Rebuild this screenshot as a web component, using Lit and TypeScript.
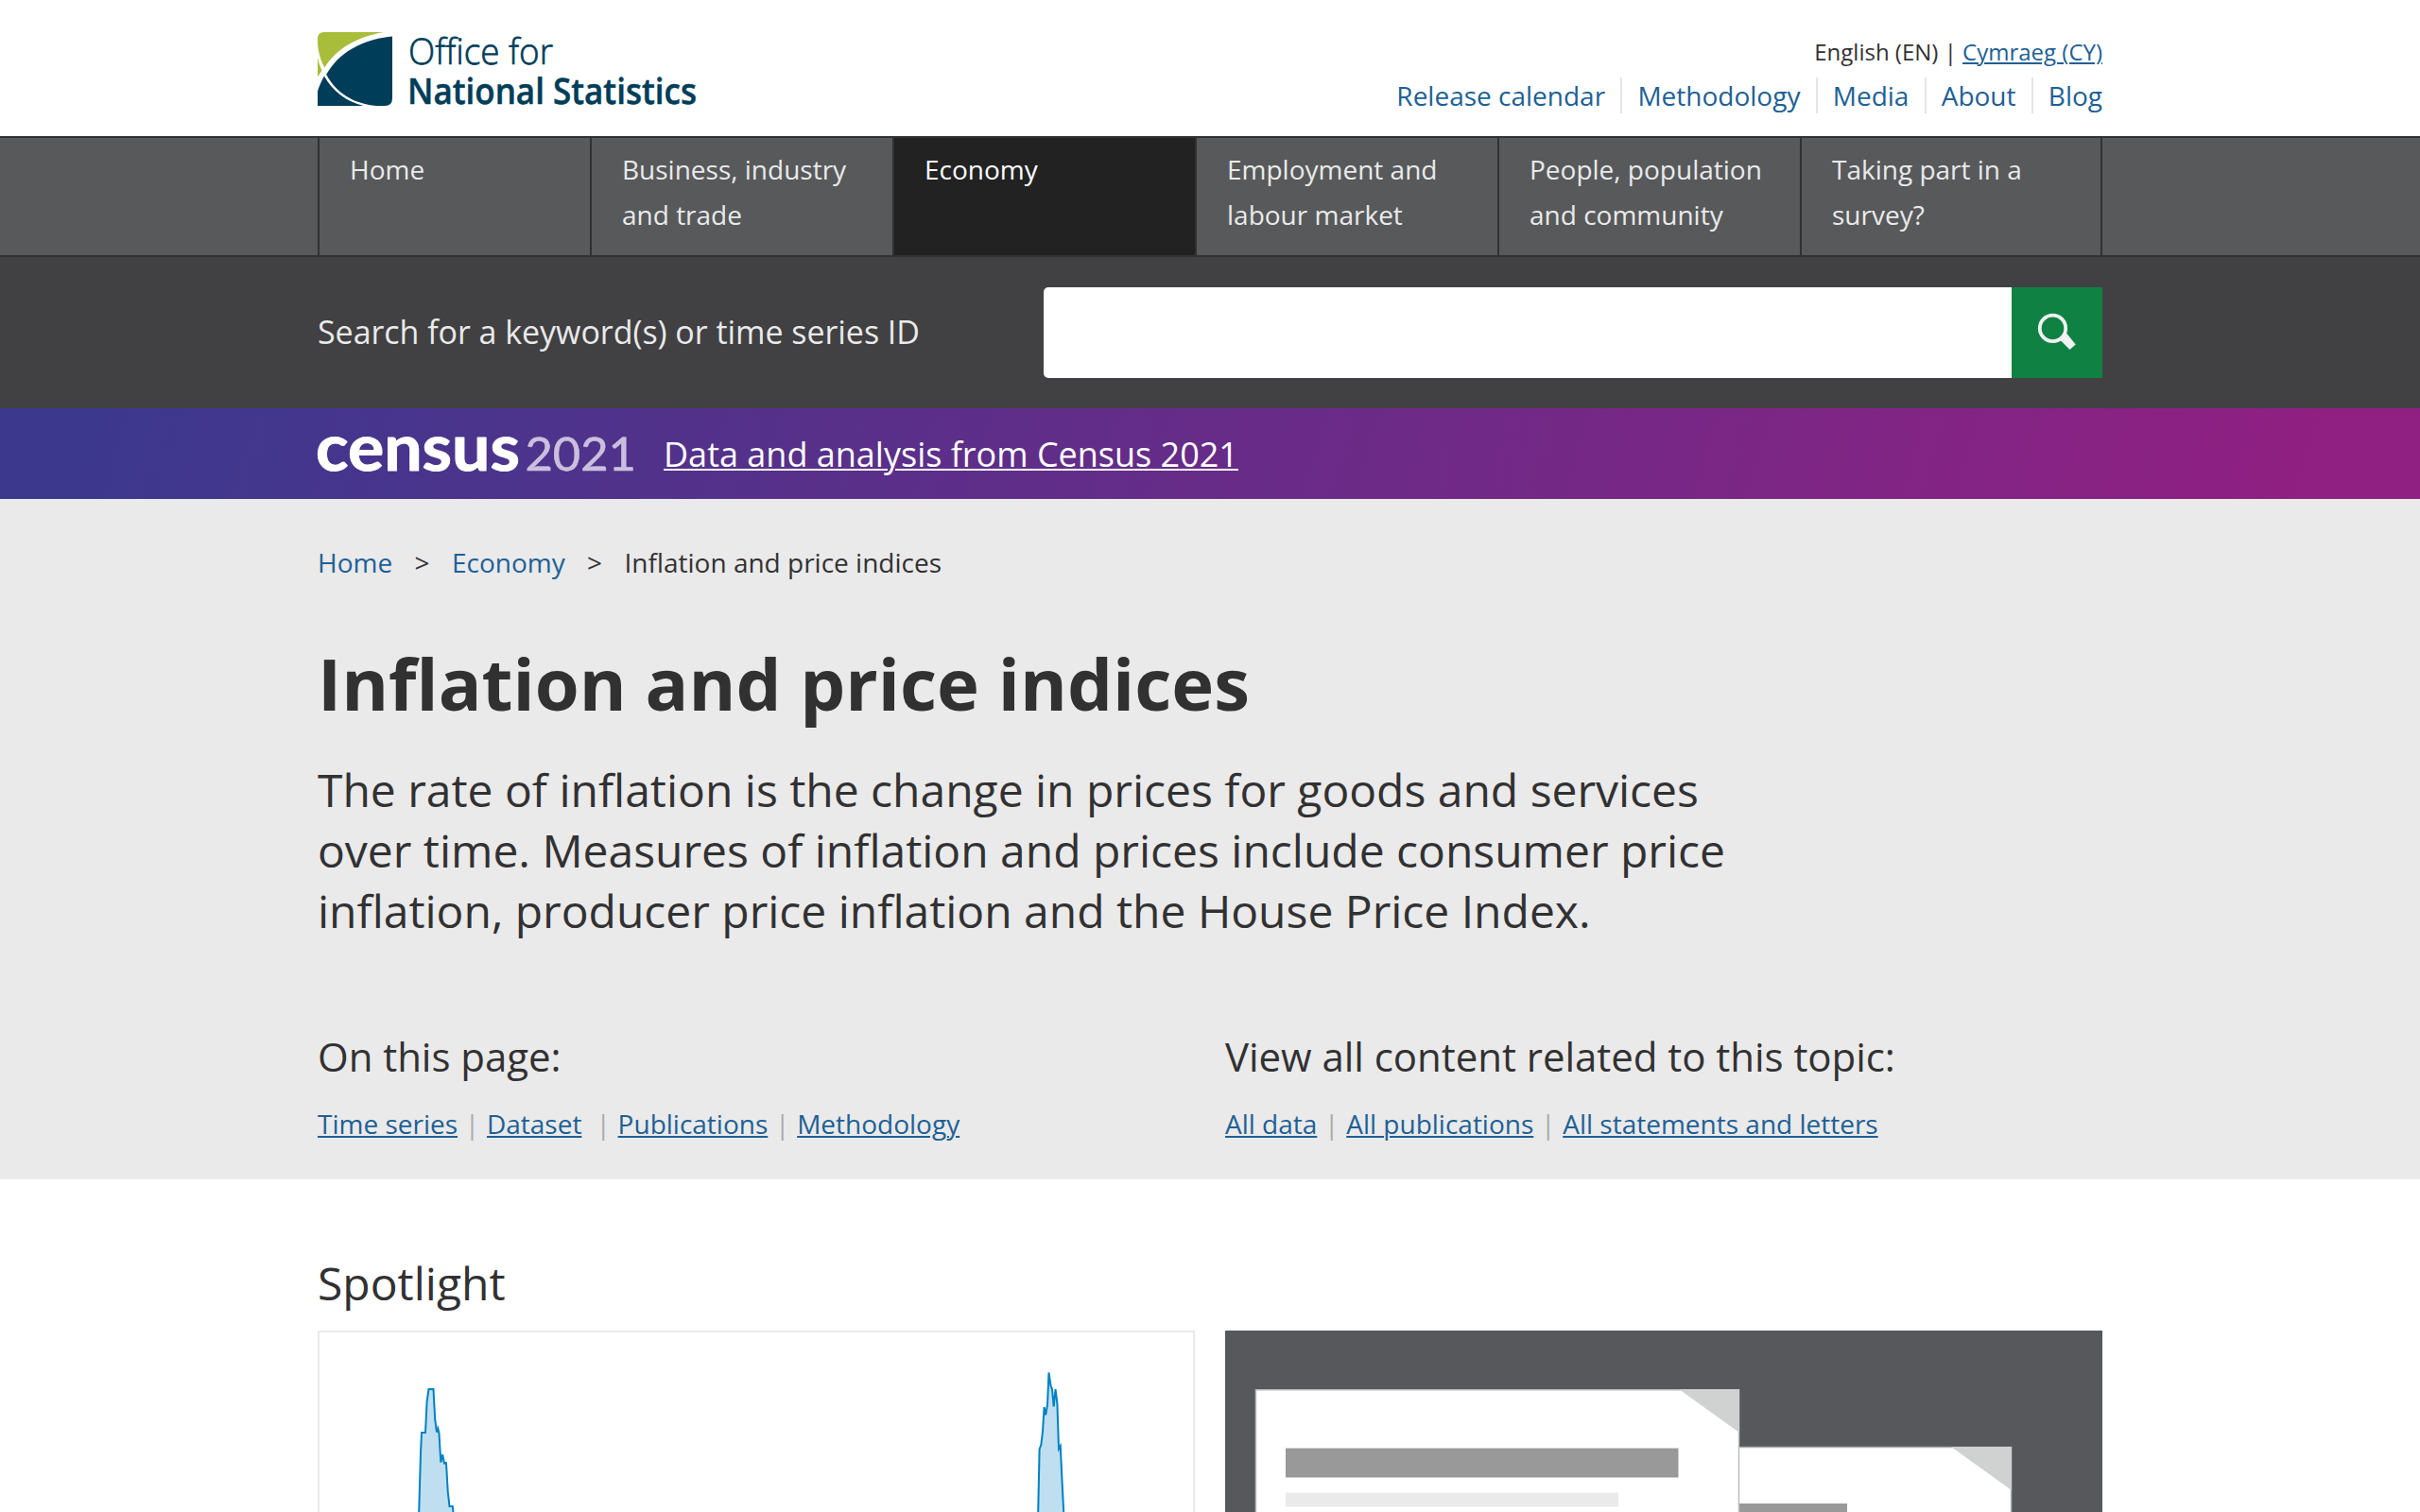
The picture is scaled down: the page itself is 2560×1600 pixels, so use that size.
import { LitElement, html, css, svg } from "lit";
import { customElement } from "lit/decorators.js";
import { classMap } from "lit/directives/class-map.js";

interface NavItem {
  label: string;
  active?: boolean;
}

interface PageLink {
  label: string;
  spaced?: boolean;
}

const SITE_LINKS = ["Release calendar", "Methodology", "Media", "About", "Blog"];

const NAV: NavItem[] = [
  { label: "Home" },
  { label: "Business, industry and trade" },
  { label: "Economy", active: true },
  { label: "Employment and labour market" },
  { label: "People, population and community" },
  { label: "Taking part in a survey?" },
];

const ON_PAGE: PageLink[] = [
  { label: "Time series" },
  { label: "Dataset", spaced: true },
  { label: "Publications" },
  { label: "Methodology" },
];

const RELATED: PageLink[] = [
  { label: "All data" },
  { label: "All publications" },
  { label: "All statements and letters" },
];

const PEAKS = [
  "104.6,200 105.2,190 107,128 108,106 112,106 113.6,73 115.5,60 120.5,60 122.2,92 124,105.5 125.3,101.7 126.5,107 128.3,137.5 130.2,129.3 132,138.5 134,138 135.7,168 137.5,184 140.8,184 142.5,200",
  "759.6,200 760.2,190 761.6,123.5 763.3,119 765,105 766.6,79 768.2,87.3 770,76.7 771.5,42.5 773.6,56.7 775,60 776.7,78.3 778.5,60 780.4,75 782,123.3 783.8,120 785.3,153 787.2,190 788,200",
];

@customElement("ons-logo")
class OnsLogo extends LitElement {
  static styles = css`
    :host {
      display: block;
    }
    .logo {
      display: block;
      overflow: visible;
      text-rendering: geometricPrecision;
    }
    .navy {
      fill: #003d59;
    }
    .lime {
      fill: #a8bd3a;
    }
    .line {
      font: 400 38px "Open Sans", "Noto Sans", sans-serif;
    }
    .light {
      font-weight: 300;
      stroke: #003d59;
      stroke-width: 0.7;
    }
    .strong {
      font-weight: 600;
      stroke: #003d59;
      stroke-width: 0.5;
    }
  `;

  render() {
    return html`
      <svg class="logo" width="402" height="78" viewBox="0 0 402 78" role="img">
        <path class="lime" d="M0 7Q0 0 7 0H70C42 5 20 17 7.4 37.6C3.6 31 .8 22 0 12Z" />
        <path class="lime" d="M0 26C.8 31 2.2 36 4.6 40.4L0 47.5Z" />
        <path
          class="navy"
          d="M79 4.5V70Q79 78 71 78H62C38 76 19 64 9.2 44.8C22 22 46 8 79 4.5Z"
        />
        <path class="navy" d="M0 62.5C1.8 57 4.2 51.500 7 46.6C16 63 31 74 48.500 78H0Z" />
        <text class="navy line light" x="96" y="34" textLength="153" lengthAdjust="spacingAndGlyphs">
          Office for
        </text>
        <text class="navy line strong" x="95" y="76" textLength="306" lengthAdjust="spacingAndGlyphs">
          National Statistics
        </text>
      </svg>
    `;
  }
}

@customElement("census-banner")
class CensusBanner extends LitElement {
  static styles = css`
    :host {
      display: block;
      background: linear-gradient(106deg, #3c388e 4%, #902082 95%);
    }
    .inner {
      box-sizing: border-box;
      display: flex;
      align-items: center;
      gap: 30px;
      width: 1888px;
      height: 96px;
      margin: 0 auto;
    }
    .mark {
      display: block;
      overflow: visible;
      text-rendering: geometricPrecision;
    }
    .word {
      font: 700 68px Lato, "Open Sans", sans-serif;
      fill: #fff;
      stroke: #fff;
      stroke-width: 1;
      stroke-linejoin: round;
    }
    .year {
      font: 400 49px Lato, "Open Sans", sans-serif;
      fill: #cbbfde;
      stroke: #cbbfde;
      stroke-width: 0.6;
      stroke-linejoin: round;
    }
    .link {
      padding-top: 1px;
      font: 36px/49px "Open Sans", "Noto Sans", sans-serif;
      color: #fff;
      text-decoration: underline;
      text-decoration-thickness: 2px;
      text-underline-offset: 2px;
    }
  `;

  render() {
    return html`
      <div class="inner">
        <svg class="mark" width="336" height="36" viewBox="0 0 336 36" role="img">
          <text class="word" x="-2" y="35.500" textLength="216" lengthAdjust="spacingAndGlyphs">census</text>
          <text class="year" x="219.500" y="35.500" textLength="117.500" lengthAdjust="spacingAndGlyphs">2021</text>
        </svg>
        <a class="link">Data and analysis from Census 2021</a>
      </div>
    `;
  }
}

@customElement("app-root")
class AppRoot extends LitElement {
  static styles = css`
    :host {
      display: flex;
      flex-direction: column;
      height: 1600px;
      overflow: hidden;
      background: #fff;
      color: #323132;
      font: 28px/38px "Open Sans", "Noto Sans", sans-serif;
    }
    h1,
    h2,
    h3,
    p {
      margin: 0;
      font-weight: 400;
    }
    .wrap {
      box-sizing: border-box;
      width: 1888px;
      margin: 0 auto;
    }
    .header {
      display: flex;
      justify-content: space-between;
      height: 144px;
    }
    .logo {
      padding-top: 34px;
    }
    .tools {
      display: flex;
      flex-direction: column;
      align-items: flex-end;
      gap: 11px;
      padding-top: 38px;
    }
    .language {
      font-size: 24px;
      line-height: 33px;
    }
    .sites {
      display: flex;
    }
    .site {
      color: #206095;
      padding: 0 16.150px;
      border-left: 2px solid #e4e4e4;
    }
    .site:first-child {
      border-left: 0;
    }
    .site:last-child {
      padding-right: 0;
    }
    .link {
      color: #206095;
      text-decoration: underline;
      text-decoration-thickness: 2px;
      text-underline-offset: 2px;
    }
    .nav {
      flex: none;
      background: #58595b;
      border-top: 2px solid #323132;
      border-bottom: 2px solid #323132;
    }
    .tabs {
      display: flex;
      height: 124px;
      border-right: 2px solid #323132;
    }
    .tab {
      box-sizing: border-box;
      flex: none;
      width: 320px;
      padding: 9px 24px 0 32px;
      border-left: 2px solid #323132;
      color: #e9eaea;
      line-height: 48px;
    }
    .tab:first-child {
      width: 288px;
    }
    .tab:last-child {
      flex: 1;
    }
    .tab.active {
      background: #222;
      color: #fff;
    }
    .search {
      flex: none;
      background: #414042;
    }
    .search-row {
      display: flex;
      align-items: center;
      justify-content: space-between;
      height: 160px;
    }
    .search-label {
      padding-bottom: 2px;
      color: #e9eaea;
      font-size: 34px;
      line-height: 46px;
      letter-spacing: -0.045px;
    }
    .search-form {
      display: flex;
      width: 1120px;
      height: 96px;
    }
    .field {
      flex: 1;
      background: #fff;
      border-radius: 5px 0 0 5px;
    }
    .go {
      width: 96px;
      background: #0f8243;
    }
    .go-icon {
      display: block;
    }
    .hero {
      flex: none;
      background: #eaeaea;
    }
    .hero-inner {
      padding: 48px 0 40px;
    }
    .crumbs {
      display: flex;
      gap: 23.400px;
    }
    .crumb {
      color: #206095;
    }
    .title {
      margin-top: 57px;
      font-size: 76px;
      line-height: 103px;
      font-weight: 700;
    }
    .lede {
      width: 1540px;
      margin-top: 30px;
      font-size: 48px;
      line-height: 64px;
      letter-spacing: -0.015px;
    }
    .columns {
      display: grid;
      grid-template-columns: 1fr 1fr;
      column-gap: 32px;
      margin-top: 93px;
    }
    .subhead {
      font-size: 42px;
      line-height: 57px;
      letter-spacing: -0.04px;
    }
    .links {
      display: flex;
      margin-top: 24px;
    }
    .bar {
      margin: 0 7.750px;
      color: #a9a9ab;
    }
    .spaced {
      margin-right: 7.300px;
    }
    .spotlight {
      flex: 1;
      display: flex;
      flex-direction: column;
      padding-top: 77px;
    }
    .section-title {
      font-size: 48px;
      line-height: 65px;
    }
    .cards {
      flex: 1;
      display: grid;
      grid-template-columns: 1fr 1fr;
      column-gap: 32px;
      margin-top: 18px;
    }
    .card {
      overflow: hidden;
    }
    .chart {
      border: 2px solid #eaeaea;
      border-bottom: 0;
    }
    .reports {
      background: #57585c;
    }
    .art {
      display: block;
    }
    .area {
      fill: #bfdff0;
      stroke: #0081c4;
      stroke-width: 2;
      stroke-linejoin: miter;
    }
  `;

  private pageLinks(links: PageLink[]) {
    return links.map(
      (l, i) => html`${i ? html`<span class="bar">|</span>` : ""}<a
          class=${classMap({ link: true, spaced: !!l.spaced })}
          >${l.label}</a
        >`
    );
  }

  private chart() {
    return html`<svg class="art" width="924" height="190" viewBox="0 0 924 190">
      ${PEAKS.map((p) => svg`<polyline class="area" points=${p} />`)}
    </svg>`;
  }

  private documents() {
    return html`<svg class="art" width="928" height="192" viewBox="0 0 928 192">
      <path d="M500 123H832V200H500Z" fill="#fff" />
      <path d="M500 123.500H831.500V200" fill="none" stroke="#b4b4b5" stroke-width="1.5" />
      <path d="M768 123H832V169Z" fill="#d0d2d1" />
      <path d="M500 183H658V200H500Z" fill="#999" />
      <path d="M32 62H544V200H32Z" fill="#fff" />
      <path d="M32.500 200V62.750H543.500V200" fill="none" stroke="#bcbcbd" stroke-width="1.5" />
      <path d="M480 62H544V108Z" fill="#d0d2d1" />
      <path d="M64 124.500H479.500V155.500H64Z" fill="#999" />
      <path d="M64 171.500H416V186.500H64Z" fill="#eaeaea" />
    </svg>`;
  }

  render() {
    return html`
      <header class="wrap header">
        <ons-logo class="logo"></ons-logo>
        <div class="tools">
          <div class="language">English (EN) | <a class="link">Cymraeg (CY)</a></div>
          <div class="sites">${SITE_LINKS.map((s) => html`<a class="site">${s}</a>`)}</div>
        </div>
      </header>
      <nav class="nav">
        <div class="wrap tabs">
          ${NAV.map(
            (n) => html`<a class=${classMap({ tab: true, active: !!n.active })}>${n.label}</a>`
          )}
        </div>
      </nav>
      <section class="search">
        <div class="wrap search-row">
          <span class="search-label">Search for a keyword(s) or time series ID</span>
          <div class="search-form">
            <div class="field"></div>
            <div class="go">
              <svg class="go-icon" width="96" height="96" viewBox="0 0 96 96">
                <circle cx="43.500" cy="43.400" r="13.700" fill="none" stroke="#f0f1f1" stroke-width="3.800" />
                <path d="M51.500 56L58 48.500L67.700 60.500L61.500 66Z" fill="#f0f1f1" />
              </svg>
            </div>
          </div>
        </div>
      </section>
      <census-banner></census-banner>
      <section class="hero">
        <div class="wrap hero-inner">
          <div class="crumbs">
            <a class="crumb">Home</a><span>&gt;</span><a class="crumb">Economy</a
            ><span>&gt;</span><span>Inflation and price indices</span>
          </div>
          <h1 class="title">Inflation and price indices</h1>
          <p class="lede">
            The rate of inflation is the change in prices for goods and services over time.
            Measures of inflation and prices include consumer price inflation, producer price
            inflation and the House Price Index.
          </p>
          <div class="columns">
            <div>
              <h2 class="subhead">On this page:</h2>
              <div class="links">${this.pageLinks(ON_PAGE)}</div>
            </div>
            <div>
              <h2 class="subhead">View all content related to this topic:</h2>
              <div class="links">${this.pageLinks(RELATED)}</div>
            </div>
          </div>
        </div>
      </section>
      <section class="wrap spotlight">
        <h2 class="section-title">Spotlight</h2>
        <div class="cards">
          <div class="card chart">${this.chart()}</div>
          <div class="card reports">${this.documents()}</div>
        </div>
      </section>
    `;
  }
}
